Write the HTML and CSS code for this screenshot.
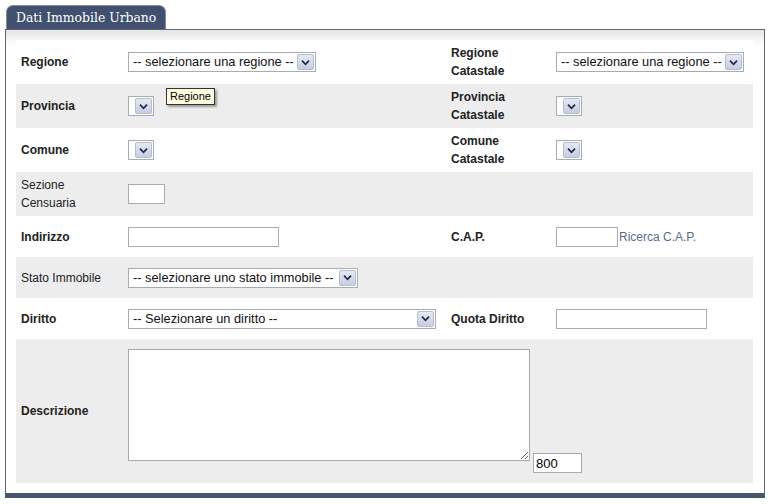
FILE: index.html
```html
<!DOCTYPE html>
<html lang="it">
<head>
<meta charset="utf-8">
<title>Dati Immobile Urbano</title>
<link rel="stylesheet" href="styles.css">
</head>
<body>
<div class="box">
  <div class="tab">Dati Immobile Urbano</div>
  <div class="panel">
    <div class="rows">
      <div class="row r44">
        <div class="lbl b">Regione</div>
        <div class="ctl"><div class="sel w188"><span class="val">-- selezionare una regione --</span><span class="arr"><svg viewBox="0 0 17 17" width="17" height="17"><path d="M4.5 6.5 L8.5 10.5 L12.5 6.5" fill="none" stroke="#1f2a4a" stroke-width="2"/></svg></span></div></div>
        <div class="lbl b">Regione<br>Catastale</div>
        <div class="ctl"><div class="sel w188"><span class="val">-- selezionare una regione --</span><span class="arr"><svg viewBox="0 0 17 17" width="17" height="17"><path d="M4.5 6.5 L8.5 10.5 L12.5 6.5" fill="none" stroke="#1f2a4a" stroke-width="2"/></svg></span></div></div>
      </div>
      <div class="row r44 alt">
        <div class="lbl b">Provincia</div>
        <div class="ctl"><div class="sel w26"><span class="val"></span><span class="arr"><svg viewBox="0 0 17 17" width="17" height="17"><path d="M4.5 6.5 L8.5 10.5 L12.5 6.5" fill="none" stroke="#1f2a4a" stroke-width="2"/></svg></span></div></div>
        <div class="lbl b">Provincia<br>Catastale</div>
        <div class="ctl"><div class="sel w26"><span class="val"></span><span class="arr"><svg viewBox="0 0 17 17" width="17" height="17"><path d="M4.5 6.5 L8.5 10.5 L12.5 6.5" fill="none" stroke="#1f2a4a" stroke-width="2"/></svg></span></div></div>
      </div>
      <div class="row r44">
        <div class="lbl b">Comune</div>
        <div class="ctl"><div class="sel w26"><span class="val"></span><span class="arr"><svg viewBox="0 0 17 17" width="17" height="17"><path d="M4.5 6.5 L8.5 10.5 L12.5 6.5" fill="none" stroke="#1f2a4a" stroke-width="2"/></svg></span></div></div>
        <div class="lbl b">Comune<br>Catastale</div>
        <div class="ctl"><div class="sel w26"><span class="val"></span><span class="arr"><svg viewBox="0 0 17 17" width="17" height="17"><path d="M4.5 6.5 L8.5 10.5 L12.5 6.5" fill="none" stroke="#1f2a4a" stroke-width="2"/></svg></span></div></div>
      </div>
      <div class="row r44 alt">
        <div class="lbl">Sezione<br>Censuaria</div>
        <div class="ctl"><input class="inp w37" type="text"></div>
        <div class="lbl"></div>
        <div class="ctl"></div>
      </div>
      <div class="row r41">
        <div class="lbl b">Indirizzo</div>
        <div class="ctl"><input class="inp w151" type="text"></div>
        <div class="lbl b">C.A.P.</div>
        <div class="ctl"><input class="inp w62" type="text"><a class="link" href="#">Ricerca C.A.P.</a></div>
      </div>
      <div class="row r41 alt">
        <div class="lbl">Stato Immobile</div>
        <div class="ctl"><div class="sel w230"><span class="val">-- selezionare uno stato immobile --</span><span class="arr"><svg viewBox="0 0 17 17" width="17" height="17"><path d="M4.5 6.5 L8.5 10.5 L12.5 6.5" fill="none" stroke="#1f2a4a" stroke-width="2"/></svg></span></div></div>
        <div class="lbl"></div>
        <div class="ctl"></div>
      </div>
      <div class="row r41">
        <div class="lbl b">Diritto</div>
        <div class="ctl"><div class="sel w308"><span class="val">-- Selezionare un diritto --</span><span class="arr"><svg viewBox="0 0 17 17" width="17" height="17"><path d="M4.5 6.5 L8.5 10.5 L12.5 6.5" fill="none" stroke="#1f2a4a" stroke-width="2"/></svg></span></div></div>
        <div class="lbl b">Quota Diritto</div>
        <div class="ctl"><input class="inp w151" type="text"></div>
      </div>
      <div class="row rdesc alt">
        <div class="lbl b">Descrizione</div>
        <div class="ctl desc"><textarea class="ta"></textarea><input class="inp cnt" type="text" value="800"></div>
      </div>
    </div>
    <div class="tip">Regione</div>
  </div>
</div>
</body>
</html>
```

FILE: styles.css
```css
* { box-sizing: border-box; }
html, body { margin: 0; padding: 0; background: #fff; }
body { font-family: "Liberation Sans", Arial, sans-serif; font-size: 12px; color: #222; }

.box { padding: 5px 0 0 5px; width: 765px; }

.tab {
  display: inline-block;
  margin-left: 1px;
  height: 24px;
  padding: 3px 9px 0 9px;
  background: #40506e;
  border: 1px solid #7f8ba3;
  border-bottom: none;
  border-radius: 7px 7px 0 0;
  color: #fff;
  font-family: "DejaVu Serif", Georgia, serif;
  font-size: 12.4px;
  line-height: 18px;
  vertical-align: bottom;
}

.panel {
  position: relative;
  width: 760px;
  border: 1px solid #5e6475;
  border-bottom: 5px solid #475570;
  padding: 10px 11px 10px 10px;
  background: linear-gradient(#e4e4e4, #ffffff 16px);
}

.rows { display: flex; flex-direction: column; }

.row {
  display: grid;
  grid-template-columns: 107px 323px 105px 1fr;
  align-items: center;
  padding-left: 5px;
  background: #fff;
}
.row.alt { background: #ededed; }
.r44 { height: 44px; }
.r41 { height: 41px; }
.rdesc { height: 144px; grid-template-columns: 107px 1fr; }

.lbl { line-height: 18px; color: #222; }
.lbl.b { font-weight: bold; }

.ctl { display: flex; align-items: center; }

.sel {
  display: flex;
  align-items: center;
  height: 20px;
  border: 1px solid #a5acb2;
  background: #fff;
  padding: 1px;
}
.sel .val {
  flex: 1;
  padding-left: 3px;
  font-size: 12.8px;
  line-height: 16px;
  color: #111;
  white-space: nowrap;
  overflow: hidden;
}
.sel .arr {
  flex: none;
  width: 17px;
  height: 16px;
  border: 1px solid #b4bdd4;
  border-radius: 2px;
  background: linear-gradient(#e6e9f3, #c6cce0);
  display: flex;
  align-items: center;
  justify-content: center;
}
.sel .arr svg { width: 15px; height: 15px; }
.w188 { width: 188px; }
.w26 { width: 26px; }
.w230 { width: 230px; }
.w308 { width: 308px; }

.inp {
  height: 20px;
  border: 1px solid #a5acb2;
  background: #fff;
  padding: 0 2px;
  font-family: "Liberation Sans", Arial, sans-serif;
  font-size: 13px;
  color: #000;
  outline: none;
}
.w37 { width: 37px; }
.w151 { width: 151px; }
.w62 { width: 62px; }

.link {
  color: #5b6a8e;
  text-decoration: none;
  font-size: 12px;
  margin-left: 1px;
}

.desc { align-items: flex-end; }
.ta {
  width: 402px;
  height: 112px;
  border: 1px solid #a9a9a9;
  background: #fff;
  margin: 0 0 12px 0;
  padding: 2px;
  resize: both;
  outline: none;
}
.cnt { width: 49px; margin-left: 3px; margin-bottom: 0; }

.tip {
  position: absolute;
  left: 160px;
  top: 58px;
  height: 17px;
  padding: 0 3px;
  background: #ffffe1;
  border: 1px solid #333;
  box-shadow: 2px 2px 2px rgba(0,0,0,0.35);
  font-size: 11px;
  line-height: 15px;
  color: #000;
}
```
